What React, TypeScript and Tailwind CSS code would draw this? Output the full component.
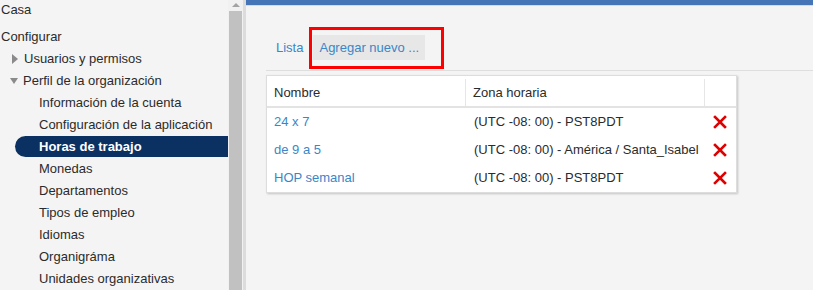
const font = { fontFamily: '"Liberation Sans", Arial, sans-serif' }

const subItems = [
  "Información de la cuenta",
  "Configuración de la aplicación",
  "Horas de trabajo",
  "Monedas",
  "Departamentos",
  "Tipos de empleo",
  "Idiomas",
  "Organigráma",
  "Unidades organizativas",
]

const rows = [
  { name: "24 x 7", zone: "(UTC -08: 00) - PST8PDT" },
  { name: "de 9 a 5", zone: "(UTC -08: 00) - América / Santa_Isabel" },
  { name: "HOP semanal", zone: "(UTC -08: 00) - PST8PDT" },
]

function DeleteIcon() {
  return (
    <svg width="14" height="14" viewBox="0 0 14 14">
      <path d="M2 2 L12 12 M12 2 L2 12" stroke="#e00000" strokeWidth="2.6" strokeLinecap="square" />
    </svg>
  )
}

function Sidebar() {
  return (
    <div className="w-[228px] shrink-0 bg-[#f4f4f4] text-[13px] text-[#2b2b2b]">
      <div className="flex h-[20px] items-center pl-[1px]">Casa</div>
      <div className="mt-[5px] flex h-[23px] items-center pl-[1px]">Configurar</div>
      <div className="flex h-[22px] items-center">
        <span className="ml-[12px] mr-[6px] inline-block h-0 w-0 border-y-[5px] border-l-[6px] border-y-transparent border-l-[#8a8a8a]" />
        Usuarios y permisos
      </div>
      <div className="flex h-[22px] items-center">
        <span className="ml-[10px] mr-[5px] inline-block h-0 w-0 border-x-[4.5px] border-t-[6px] border-x-transparent border-t-[#8a8a8a]" />
        Perfil de la organización
      </div>
      {subItems.map((item) =>
        item === "Horas de trabajo" ? (
          <div key={item} className="flex h-[22px] items-start">
            <div className="ml-[15px] flex h-[21px] flex-1 items-center rounded-l-full bg-[#0b3163] pl-[24px] font-bold text-white">
              {item}
            </div>
          </div>
        ) : (
          <div key={item} className="flex h-[22px] items-center pl-[39px]">
            {item}
          </div>
        )
      )}
    </div>
  )
}

function Scrollbar() {
  return (
    <div className="flex w-[15px] shrink-0 flex-col items-center bg-[#f1f1f1]">
      <span className="mt-[3px] inline-block h-0 w-0 border-x-[4px] border-b-[4px] border-x-transparent border-b-[#a3a3a3]" />
      <div className="mt-[4px] w-[13px] flex-1 bg-[#c1c1c1]" />
    </div>
  )
}

export default function App() {
  return (
    <div className="flex h-[290px] w-[813px] overflow-hidden bg-[#f4f4f4]" style={font}>
      <Sidebar />
      <Scrollbar />
      <div className="w-[3px] shrink-0 bg-[#dcdcdc]" />
      <main className="flex-1">
        <div className="h-[5px] bg-[#4675b7]" />
        <div className="h-[1px] bg-[#d5dbe4]" />
        <div className="ml-[20px] mt-[29px] flex items-center border-b border-[#dedede] pb-[10px] text-[13px]">
          <span className="px-[10px] text-[#3a86c8]">Lista</span>
          <div className="relative">
            <span className="flex h-[25px] items-center bg-[#e7e7e7] px-[6px] text-[#3a86c8]">Agregar nuevo ...</span>
            <div className="pointer-events-none absolute -bottom-[9px] -left-[4px] -right-[19px] -top-[8px] border-[3px] border-[#ff0000]" />
          </div>
        </div>
        <div className="ml-[20px] mt-[4px] w-[471px] border border-[#dddddd] bg-white text-[13px] text-[#2b2b2b] shadow-[1px_1px_2px_rgba(0,0,0,0.2)]">
          <div className="flex h-[32px] border-b-2 border-[#e3e3e3] pt-[3px]">
            <div className="flex w-[199px] items-center border-r border-[#e6e6e6] pl-[7px]">Nombre</div>
            <div className="flex w-[239px] items-center border-r border-[#e6e6e6] pl-[7px]">Zona horaria</div>
            <div className="flex-1" />
          </div>
          {rows.map((r) => (
            <div key={r.name} className="flex h-[28px] items-center">
              <div className="w-[199px] pl-[7px] text-[#3a86c8]">{r.name}</div>
              <div className="w-[239px] pl-[8px]">{r.zone}</div>
              <div className="flex flex-1 pl-[8px]">
                <DeleteIcon />
              </div>
            </div>
          ))}
        </div>
      </main>
    </div>
  )
}
